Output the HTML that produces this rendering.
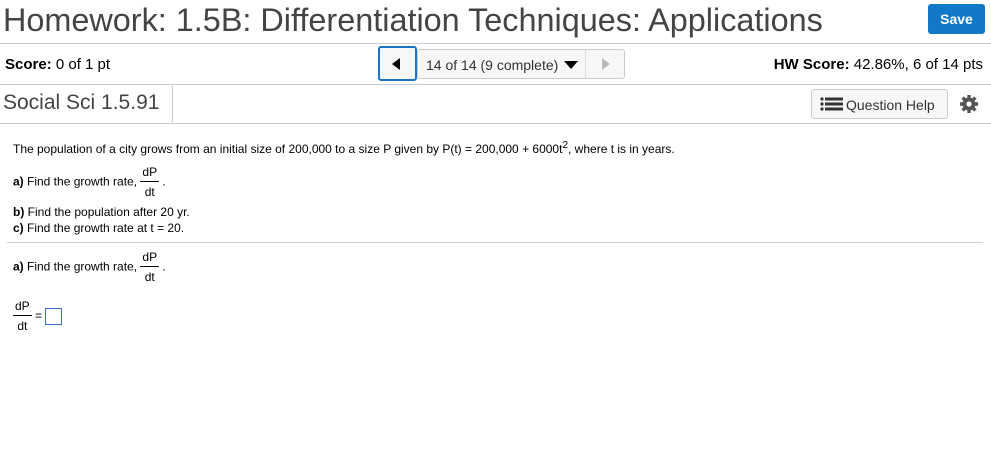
<!DOCTYPE html>
<html><head><style>
*{margin:0;padding:0;box-sizing:border-box}
body{width:991px;height:452px;background:#fff;font-family:"Liberation Sans",Arial,sans-serif;color:#000;position:relative;overflow:hidden}
.a{position:absolute;white-space:nowrap}
.hr{position:absolute;left:0;width:991px;height:1px;background:#c8ccd6}
.frac{display:inline-block;vertical-align:middle;text-align:center;font-size:12px;line-height:17px}
.frac span{display:block;padding:0 2px}
.frac .n{border-bottom:1px solid #000;margin-bottom:2px}
</style></head><body>
<div class="a" style="left:3px;top:0px;font-size:32.4px;color:#444;line-height:40px">Homework: 1.5B: Differentiation Techniques: Applications</div>
<div class="a" style="left:928px;top:4px;width:57px;height:30px;background:#1279c9;border-radius:3px;color:#fff;font-weight:bold;font-size:14px;line-height:30px;text-align:center">Save</div>
<div class="hr" style="top:43px"></div>
<div class="a" style="left:5px;top:56px;font-size:15px"><b>Score:</b> 0 of 1 pt</div>
<div class="a" style="left:417px;top:49px;width:208px;height:30px;border:1px solid #ccc;border-radius:3px;background:#f7f7f7"></div>
<div class="a" style="left:585px;top:49px;width:1px;height:30px;background:#ddd"></div>
<div class="a" style="left:378px;top:46px;width:39px;height:35px;border:2px solid #1a73c4;border-radius:3px;background:#f7f7f7"></div>
<div class="a" style="left:392px;top:58px;width:0;height:0;border-top:6px solid transparent;border-bottom:6px solid transparent;border-right:8px solid #000"></div>
<div class="a" style="left:426px;top:57px;font-size:14px;color:#333">14 of 14 (9 complete)</div>
<div class="a" style="left:564px;top:61px;width:0;height:0;border-left:7px solid transparent;border-right:7px solid transparent;border-top:8px solid #000"></div>
<div class="a" style="left:602px;top:58px;width:0;height:0;border-top:6px solid transparent;border-bottom:6px solid transparent;border-left:8px solid #bbb"></div>
<div class="a" style="right:8px;top:56px;font-size:15px"><b>HW Score:</b> 42.86%, 6 of 14 pts</div>
<div class="hr" style="top:84px"></div>
<div class="a" style="left:3px;top:91px;font-size:21px;color:#444">Social Sci 1.5.91</div>
<div class="a" style="left:172px;top:86px;width:1px;height:36px;background:#c8ccd6"></div>
<div class="a" style="left:811px;top:89px;width:137px;height:30px;border:1px solid #ccc;border-radius:3px;background:#f7f7f7"></div>
<svg class="a" style="left:820px;top:97px" width="24" height="14"><g fill="#333"><circle cx="2" cy="2" r="1.6"/><circle cx="2" cy="7" r="1.6"/><circle cx="2" cy="12" r="1.6"/><rect x="5" y="0.5" width="18" height="3"/><rect x="5" y="5.5" width="18" height="3"/><rect x="5" y="10.5" width="18" height="3"/></g></svg>
<div class="a" style="left:846px;top:97px;font-size:14px;color:#333">Question Help</div>
<svg class="a" style="left:959px;top:94px" width="20" height="20" viewBox="0 0 20 20"><g fill="#555"><circle cx="10" cy="10" r="6.5"/><g stroke="#555" stroke-width="3.4"><line x1="10" y1="1" x2="10" y2="19"/><line x1="1" y1="10" x2="19" y2="10"/><line x1="3.6" y1="3.6" x2="16.4" y2="16.4"/><line x1="16.4" y1="3.6" x2="3.6" y2="16.4"/></g></g><circle cx="10" cy="10" r="2.6" fill="#fff"/></svg>
<div class="hr" style="top:123px"></div>
<div class="a" style="left:13px;top:140px;font-size:12px">The population of a city grows from an initial size of 200,000 to a size P given by P(t) = 200,000 + 6000t<sup style="font-size:10px">2</sup>, where t is in years.</div>
<div class="a" style="left:13px;top:164px;font-size:12px"><b>a)</b> Find the growth rate, <span class="frac"><span class="n">dP</span><span>dt</span></span> .</div>
<div class="a" style="left:13px;top:204px;font-size:12px;line-height:16px"><b>b)</b> Find the population after 20 yr.<br><b>c)</b> Find the growth rate at t = 20.</div>
<div class="a" style="left:7px;top:242px;width:976px;height:1px;background:#ccd"></div>
<div class="a" style="left:13px;top:249px;font-size:12px"><b>a)</b> Find the growth rate, <span class="frac"><span class="n">dP</span><span>dt</span></span> .</div>
<div class="a" style="left:13px;top:298px;font-size:12px"><span class="frac"><span class="n">dP</span><span>dt</span></span> = <span style="display:inline-block;vertical-align:middle;width:17px;height:17px;border:1px solid #3a6ec0"></span></div>
</body></html>
